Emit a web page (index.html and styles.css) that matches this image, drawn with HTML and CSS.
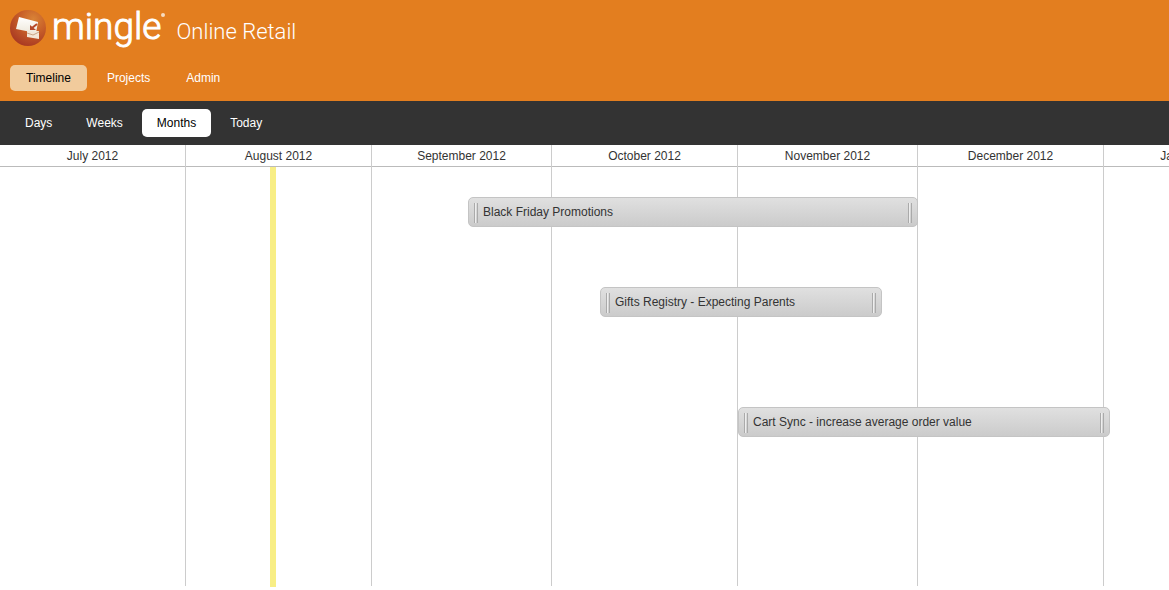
FILE: index.html
```html
<!DOCTYPE html>
<html lang="en">
<head>
<meta charset="utf-8">
<title>Mingle - Online Retail</title>
<link rel="stylesheet" href="styles.css">
</head>
<body>
<header class="header">
  <div class="brand">
    <a class="logo" href="#">
      <svg class="logo-mark" viewBox="0 0 36 36" aria-hidden="true">
        <defs>
          <radialGradient id="ball" cx="0.65" cy="0.25" r="0.8">
            <stop offset="0" stop-color="#d98336"/>
            <stop offset="0.45" stop-color="#c96129"/>
            <stop offset="1" stop-color="#a83822"/>
          </radialGradient>
          <linearGradient id="card" x1="0" y1="0" x2="0" y2="1">
            <stop offset="0" stop-color="#ffffff"/>
            <stop offset="1" stop-color="#eee8db"/>
          </linearGradient>
        </defs>
        <circle cx="18" cy="18" r="18" fill="url(#ball)"/>
        <path d="M17 21h12v8l-12-2z" fill="#f3e6d6"/>
        <path d="M17 23l6 2 6-3" fill="none" stroke="#c9a586"/>
        <path d="M9 7l19 5-2 11-20-4z" fill="url(#card)"/>
        <path d="M27 14l-5 4" fill="none" stroke="#b6492a" stroke-width="2"/>
        <path d="M20 15v5h6z" fill="#b6492a"/>
      </svg>
      <span class="wordmark">mingle</span>
      <span class="registered"></span>
    </a>
    <h1 class="program">Online Retail</h1>
  </div>
  <nav class="tabs" aria-label="Main">
    <a class="tab tab-current" href="#">Timeline</a>
    <a class="tab" href="#">Projects</a>
    <a class="tab" href="#">Admin</a>
  </nav>
</header>
<div class="toolbar">
  <button class="zoom" type="button">Days</button>
  <button class="zoom" type="button">Weeks</button>
  <button class="zoom zoom-current" type="button">Months</button>
  <button class="zoom" type="button">Today</button>
</div>
<main class="timeline">
  <div class="months">
    <div class="month" style="width:186px"><h2 class="month-name">July 2012</h2></div>
    <div class="month" style="width:186px"><h2 class="month-name">August 2012</h2></div>
    <div class="month" style="width:180px"><h2 class="month-name">September 2012</h2></div>
    <div class="month" style="width:186px"><h2 class="month-name">October 2012</h2></div>
    <div class="month" style="width:180px"><h2 class="month-name">November 2012</h2></div>
    <div class="month" style="width:186px"><h2 class="month-name">December 2012</h2></div>
    <div class="month" style="width:186px"><h2 class="month-name">January 2013</h2></div>
  </div>
  <div class="today" style="left:270px"></div>
  <div class="tracks">
    <div class="track"><div class="objective" style="margin-left:468px;width:450px"><span class="grip"></span><span class="objective-name">Black Friday Promotions</span><span class="grip"></span></div></div>
    <div class="track"></div>
    <div class="track"></div>
    <div class="track"><div class="objective" style="margin-left:600px;width:282px"><span class="grip"></span><span class="objective-name">Gifts Registry - Expecting Parents</span><span class="grip"></span></div></div>
    <div class="track"></div>
    <div class="track"></div>
    <div class="track"></div>
    <div class="track"><div class="objective" style="margin-left:738px;width:372px"><span class="grip"></span><span class="objective-name">Cart Sync - increase average order value</span><span class="grip"></span></div></div>
  </div>
</main>
</body>
</html>
```
FILE: styles.css
```css
* { box-sizing: border-box; }
body {
  display: flex;
  flex-direction: column;
  min-height: 100vh;
  margin: 0;
  background: #fff;
  color: #333;
  font: 12px/20px "Liberation Sans", Arial, sans-serif;
}
.header {
  padding: 8px 10px 10px;
  background: #e37e1f;
}
.brand {
  display: flex;
  align-items: baseline;
  gap: 11px;
  height: 57px;
}
.logo {
  display: flex;
  align-items: baseline;
  color: #fff;
  text-decoration: none;
}
.logo-mark {
  align-self: flex-start;
  width: 36px;
  height: 36px;
  margin: 2px 6px 0 0;
}
.wordmark {
  font: 300 37px/38px Roboto, sans-serif;
  -webkit-text-stroke: 1px #fff;
}
.registered {
  align-self: flex-start;
  width: 4px;
  height: 4px;
  margin-top: 5px;
  border-radius: 50%;
  background: #f7dcc0;
}
.program {
  margin: 0;
  color: #fff;
  font: 300 22px/38px Roboto, sans-serif;
}
.tabs {
  display: flex;
  gap: 4px;
}
.tab {
  padding: 3px 16px;
  border-radius: 5px;
  color: #fff;
  text-decoration: none;
}
.tab-current {
  background: #f1cb9c;
  color: #000;
}
.toolbar {
  display: flex;
  gap: 4px;
  padding: 8px 10px;
  background: #333;
}
.zoom {
  padding: 4px 15px;
  border: 0;
  border-radius: 5px;
  background: none;
  color: #fff;
  font: inherit;
}
.zoom-current {
  background: #fff;
  color: #000;
}
.timeline {
  position: relative;
  display: grid;
  flex: 1;
  grid-template-columns: minmax(0, 1fr);
}
.months {
  display: flex;
  grid-area: 1 / 1;
  overflow: hidden;
  margin-bottom: 4px;
}
.month {
  flex: none;
  border-right: 1px solid #ccc;
}
.month-name {
  margin: 0;
  padding: 1px 0 0;
  border-bottom: 1px solid #bbb;
  font: inherit;
  text-align: center;
}
.today {
  position: absolute;
  top: 22px;
  bottom: 3px;
  width: 6px;
  background: #f8ee85;
}
.tracks {
  position: relative;
  grid-area: 1 / 1;
  padding-top: 52px;
}
.track { height: 30px; }
.objective {
  display: flex;
  align-items: center;
  gap: 5px;
  height: 30px;
  padding: 0 5px;
  border: 1px solid #c4c4c4;
  border-radius: 5px;
  background: linear-gradient(#e0e0e0, #cbcbcb);
}
.objective-name {
  flex: 1;
  color: #333;
}
.grip {
  width: 4px;
  height: 20px;
  margin-top: 2px;
  border: solid #aaa;
  border-width: 0 1px;
  background: linear-gradient(90deg, #eee 50%, transparent 50%);
}
```
